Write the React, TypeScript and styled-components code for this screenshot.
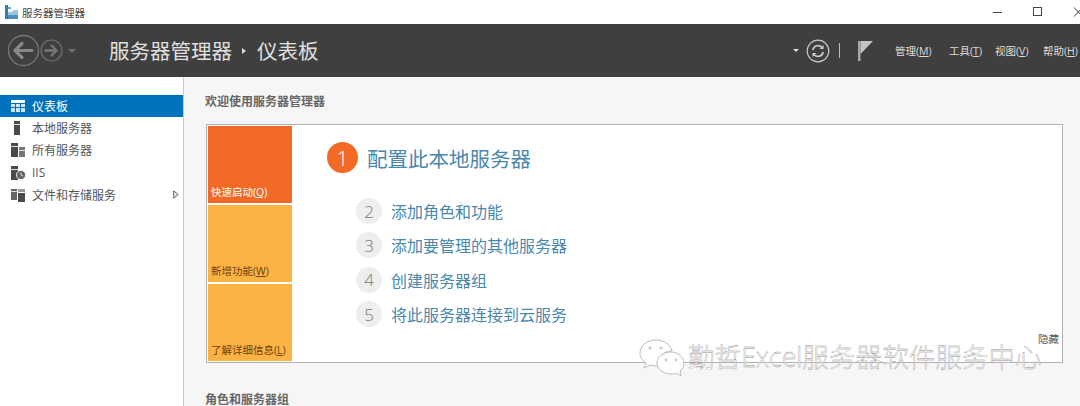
import React from "react";
import styled, { createGlobalStyle } from "styled-components";

const GlobalStyle = createGlobalStyle`
  html, body {
    margin: 0;
    padding: 0;
    width: 1080px;
    height: 406px;
    overflow: hidden;
    background: #f6f6f6;
    font-family: "Open Sans", "Noto Sans CJK SC", sans-serif;
  }
  * { box-sizing: border-box; }
`;

const Page = styled.div`
  position: relative;
  display: flex;
  flex-direction: column;
  width: 1080px;
  height: 406px;
  overflow: hidden;
`;

const TitleBar = styled.div`
  display: flex;
  align-items: center;
  height: 24px;
  padding-left: 4px;
  background: #fff;
  flex-shrink: 0;
`;

const TitleText = styled.div`
  margin-left: 3px;
  font-size: 10.5px;
  color: #444;
`;

const WindowButtons = styled.div`
  display: flex;
  align-items: center;
  gap: 30px;
  margin-left: auto;
  margin-right: -3px;
  height: 100%;
`;

const WindowButton = styled.div`
  display: flex;
  justify-content: center;
  align-items: center;
  width: 10px;
`;

const Header = styled.div`
  display: flex;
  align-items: center;
  height: 53px;
  padding-left: 7px;
  background: #3f3f3f;
  flex-shrink: 0;
`;

const NavArrows = styled.div`
  display: flex;
  align-items: center;
  width: 102px;
`;

const Crumb = styled.div`
  font-size: 20.5px;
  line-height: 28px;
  color: #e0e0e0;
`;

const CrumbSep = styled.div`
  width: 0;
  height: 0;
  margin: 0 11px 0 10px;
  border-left: 4px solid #ddd;
  border-top: 3px solid transparent;
  border-bottom: 3px solid transparent;
`;

const HeaderRight = styled.div`
  display: flex;
  align-items: center;
  margin-left: auto;
  height: 100%;
`;

const Caret = styled.div<{ $dim?: boolean }>`
  width: 0;
  height: 0;
  margin: ${(props) => (props.$dim ? "0 0 0 5px" : "0 7px 0 0")};
  border-top: ${(props) => (props.$dim ? "4px solid #6f6f6f" : "3px solid #ddd")};
  border-left: ${(props) => (props.$dim ? 4 : 3)}px solid transparent;
  border-right: ${(props) => (props.$dim ? 4 : 3)}px solid transparent;
`;

const Pipe = styled.div`
  width: 1px;
  height: 15px;
  margin: 0 18px 0 9px;
  background: #bbb;
`;

const FlagWrap = styled.div`
  display: flex;
  margin-right: 22px;
`;

const Menu = styled.div<{ $width: number }>`
  width: ${(props) => props.$width}px;
  font-size: 10.5px;
  color: #dcdcdc;
  white-space: nowrap;

  u {
    text-underline-offset: 1px;
  }
`;

const Body = styled.div`
  display: flex;
  flex: 1;
  min-height: 0;
`;

const Sidebar = styled.div`
  width: 184px;
  padding-top: 18px;
  background: #fff;
  border-right: 1px solid #c8c8c8;
  flex-shrink: 0;
`;

const NavItem = styled.div<{ $active?: boolean }>`
  display: flex;
  align-items: center;
  height: 22px;
  margin-bottom: 0.2px;
  padding-left: 11px;
  font-size: 12px;
  background: ${(props) => (props.$active ? "#0072bc" : "transparent")};
  color: ${(props) => (props.$active ? "#fff" : "#555")};
`;

const NavIcon = styled.div`
  display: flex;
  width: 21px;
  flex-shrink: 0;
`;

const NavArrow = styled.div`
  margin-left: auto;
  margin-right: 4px;
  display: flex;
`;

const Main = styled.div`
  flex: 1;
  min-width: 0;
  padding: 16px 17px 0 22px;
  background: #f6f6f6;
`;

const SectionTitle = styled.div`
  font-size: 12px;
  line-height: 17px;
  margin-left: -1px;
  color: #666;
  font-weight: 700;
`;

const Card = styled.div`
  display: flex;
  height: 239px;
  margin-top: 14px;
  padding: 1px;
  background: #fff;
  border: 1px solid #b2b2b2;
`;

const TileColumn = styled.div`
  display: flex;
  flex-direction: column;
  gap: 2px;
  width: 84px;
  flex-shrink: 0;
`;

const Tile = styled.div<{ $primary?: boolean }>`
  display: flex;
  align-items: flex-end;
  flex: 1;
  padding: 0 0 3px 3px;
  font-size: 10.5px;
  line-height: 16px;
  background: ${(props) => (props.$primary ? "#f26a26" : "#fdb244")};
  color: ${(props) => (props.$primary ? "#fff" : "#6b4310")};
  white-space: nowrap;
`;

const CardBody = styled.div`
  position: relative;
  flex: 1;
  padding: 16px 0 0 35px;
`;

const HeroRow = styled.div`
  display: flex;
  align-items: center;
  gap: 9px;
  height: 31px;
  margin-bottom: 25px;
`;

const HeroBadge = styled.div`
  display: flex;
  justify-content: center;
  align-items: center;
  width: 31px;
  height: 31px;
  border-radius: 50%;
  background: #f26a26;
  color: #fff;
  font-size: 21px;
  font-weight: 300;
`;

const HeroText = styled.div`
  font-size: 20.5px;
  color: #4a87ad;
`;

const StepList = styled.div`
  display: flex;
  flex-direction: column;
  gap: 8.4px;
  padding-left: 29px;
`;

const StepRow = styled.div`
  display: flex;
  align-items: center;
  gap: 9px;
  height: 26px;
`;

const StepBadge = styled.div`
  display: flex;
  justify-content: center;
  align-items: center;
  width: 26px;
  height: 26px;
  border-radius: 50%;
  background: #eeeeee;
  color: #777;
  font-size: 17px;
  font-weight: 300;
`;

const StepText = styled.div`
  font-size: 16px;
  color: #4a87ad;
`;

const HideLink = styled.div`
  position: absolute;
  right: 2px;
  bottom: 15px;
  font-size: 10.5px;
  color: #555;
`;

const BottomTitle = styled(SectionTitle)`
  margin-top: 28px;
`;

const Watermark = styled.div`
  position: absolute;
  left: 639px;
  top: 338px;
  display: flex;
  align-items: center;
  gap: 3px;
`;

const WatermarkText = styled.div`
  font-size: 26.6px;
  line-height: 26px;
  font-weight: 300;
  color: rgba(255, 255, 255, 0.92);
  white-space: nowrap;
  -webkit-text-stroke: 0.35px #8c8c8c;
`;

const AppIcon = () => (
  <svg width="15" height="16" viewBox="0 0 15 16">
    <rect x="1" y="1" width="3" height="14" fill="#2c7fb8" />
    <rect x="4" y="3" width="3" height="2" fill="#5aa5d6" />
    <path d="M4 8h4l2-2h4v9H4z" fill="#9cc4dc" />
    <rect x="4" y="11" width="10" height="4" fill="#4d8fbb" />
  </svg>
);

const BackArrow = () => (
  <svg width="33" height="33" viewBox="0 0 33 33" fill="none" stroke="#777" strokeLinecap="round" strokeLinejoin="round">
    <circle cx="16.5" cy="16.5" r="15" strokeWidth="1.3" />
    <path d="M25 16.5H9M15 9.5l-7 7 7 7" strokeWidth="3.2" stroke="#888" />
  </svg>
);

const ForwardArrow = () => (
  <svg width="23" height="23" viewBox="0 0 23 23" fill="none" stroke="#6f6f6f" strokeLinecap="round" strokeLinejoin="round">
    <circle cx="11.5" cy="11.5" r="10.5" strokeWidth="1.2" />
    <path d="M5.5 11.5h11M11.5 6.5l5 5-5 5" strokeWidth="2.4" stroke="#777" />
  </svg>
);

const RefreshIcon = () => (
  <svg width="24" height="24" viewBox="0 0 24 24" fill="none" stroke="#c8c8c8">
    <circle cx="12" cy="12" r="10.8" strokeWidth="1.2" />
    <path d="M6.8 11a5.3 5.3 0 0 1 9.2-2.6M17.2 13a5.3 5.3 0 0 1-9.2 2.6" strokeWidth="1.7" />
    <path d="M17.6 6v4h-4zM6.4 18v-4h4z" fill="#c8c8c8" stroke="none" />
  </svg>
);

const FlagIcon = () => (
  <svg width="15" height="22" viewBox="0 0 15 22">
    <rect x="0" y="1" width="2.5" height="20" fill="#a8a8a8" />
    <path d="M2.5 1H15L2.5 14z" fill="#c4c4c4" />
  </svg>
);

const DashboardIcon = () => (
  <svg width="14" height="12" viewBox="0 0 14 12">
    <rect width="14" height="3" fill="#fff" />
    <path d="M0 4h4v3H0zM5 4h4v3H5zM10 4h4v3h-4zM0 8h4v4H0zM5 8h4v4H5zM10 8h4v4h-4z" fill="#cfe4f3" />
  </svg>
);

const ServerIcon = () => (
  <svg width="14" height="14" viewBox="0 0 14 14">
    <rect x="3" y="0" width="6" height="14" fill="#4a4a4a" />
    <rect x="3" y="3" width="6" height="1" fill="#ddd" />
  </svg>
);

const ServersIcon = () => (
  <svg width="14" height="14" viewBox="0 0 14 14">
    <rect x="0" y="0" width="7" height="14" fill="#4a4a4a" />
    <rect x="0" y="3" width="7" height="1" fill="#ddd" />
    <rect x="8" y="4" width="6" height="10" fill="#777" />
    <rect x="8" y="7" width="6" height="1" fill="#ddd" />
  </svg>
);

const IisIcon = () => (
  <svg width="15" height="14" viewBox="0 0 15 14">
    <rect x="0" y="0" width="7" height="14" fill="#4a4a4a" />
    <rect x="0" y="3" width="7" height="1" fill="#ddd" />
    <circle cx="10" cy="9" r="4.6" fill="#666" stroke="#fff" strokeWidth="0.8" />
    <path d="M10 6.5V9l2 1" fill="none" stroke="#ddd" strokeWidth="0.9" />
  </svg>
);

const StorageIcon = () => (
  <svg width="15" height="14" viewBox="0 0 15 14">
    <path d="M0 1h6v11H0z" fill="#666" />
    <path d="M7 1h7v3H7z" fill="#999" />
    <path d="M7 5h7v9H7z" fill="#4a4a4a" />
    <path d="M0 3h6v1H0z" fill="#ddd" />
  </svg>
);

const ExpandArrow = () => (
  <svg width="6" height="9" viewBox="0 0 6 9">
    <path d="M0.7 0.8L5.2 4.5L0.7 8.2z" fill="#e8e8e8" stroke="#666" />
  </svg>
);

const WeChatIcon = () => (
  <svg width="46" height="38" viewBox="0 0 46 38" fill="#fff" stroke="#bbb" strokeWidth="1">
    <path d="M17 2C8 2 1 8 1 15c0 4 2 7 6 10l-2 5 6-3c2 .6 4 1 6 1 .8 0 1.5 0 2-.1C18 20 24 13 33 13c-1-6-8-11-16-11z" />
    <path d="M32 14c-8 0-14 5-14 11s6 11 14 11c2 0 3 0 5-1l5 3-1-5c3-2 4-5 4-8 0-6-6-11-13-11z" />
    <circle cx="11" cy="10" r="1.6" fill="#ccc" stroke="none" />
    <circle cx="22" cy="10" r="1.6" fill="#ccc" stroke="none" />
    <circle cx="27" cy="22" r="1.4" fill="#ccc" stroke="none" />
    <circle cx="37" cy="22" r="1.4" fill="#ccc" stroke="none" />
  </svg>
);

const navItems = [
  { label: "仪表板", icon: <DashboardIcon />, active: true },
  { label: "本地服务器", icon: <ServerIcon /> },
  { label: "所有服务器", icon: <ServersIcon /> },
  { label: "IIS", icon: <IisIcon /> },
  { label: "文件和存储服务", icon: <StorageIcon />, arrow: true },
];

const steps = [
  { num: 2, label: "添加角色和功能" },
  { num: 3, label: "添加要管理的其他服务器" },
  { num: 4, label: "创建服务器组" },
  { num: 5, label: "将此服务器连接到云服务" },
];

const menus = [
  { label: "管理", key: "M", width: 54 },
  { label: "工具", key: "T", width: 46 },
  { label: "视图", key: "V", width: 48 },
  { label: "帮助", key: "H", width: 37 },
];

function App() {
  return (
    <Page>
      <GlobalStyle />
      <TitleBar>
        <AppIcon />
        <TitleText>服务器管理器</TitleText>
        <WindowButtons>
          <WindowButton>
            <svg width="10" height="10" viewBox="0 0 10 10">
              <path d="M0 5.5h9" stroke="#444" fill="none" />
            </svg>
          </WindowButton>
          <WindowButton>
            <svg width="10" height="10" viewBox="0 0 10 10">
              <rect x="0.5" y="0.5" width="8" height="8" stroke="#444" fill="none" />
            </svg>
          </WindowButton>
          <WindowButton>
            <svg width="10" height="10" viewBox="0 0 10 10">
              <path d="M1 0.5l8.5 9M9.5 0.5l-8.5 9" stroke="#444" fill="none" />
            </svg>
          </WindowButton>
        </WindowButtons>
      </TitleBar>
      <Header>
        <NavArrows>
          <BackArrow />
          <ForwardArrow />
          <Caret $dim />
        </NavArrows>
        <Crumb>服务器管理器</Crumb>
        <CrumbSep />
        <Crumb>仪表板</Crumb>
        <HeaderRight>
          <Caret />
          <RefreshIcon />
          <Pipe />
          <FlagWrap>
            <FlagIcon />
          </FlagWrap>
          {menus.map((m) => (
            <Menu key={m.key} $width={m.width}>
              {m.label}(<u>{m.key}</u>)
            </Menu>
          ))}
        </HeaderRight>
      </Header>
      <Body>
        <Sidebar>
          {navItems.map((n) => (
            <NavItem key={n.label} $active={n.active}>
              <NavIcon>{n.icon}</NavIcon>
              {n.label}
              {n.arrow && (
                <NavArrow>
                  <ExpandArrow />
                </NavArrow>
              )}
            </NavItem>
          ))}
        </Sidebar>
        <Main>
          <SectionTitle>欢迎使用服务器管理器</SectionTitle>
          <Card>
            <TileColumn>
              <Tile $primary>
                <span>
                  快速启动(<u>Q</u>)
                </span>
              </Tile>
              <Tile>
                <span>
                  新增功能(<u>W</u>)
                </span>
              </Tile>
              <Tile>
                <span>
                  了解详细信息(<u>L</u>)
                </span>
              </Tile>
            </TileColumn>
            <CardBody>
              <HeroRow>
                <HeroBadge>1</HeroBadge>
                <HeroText>配置此本地服务器</HeroText>
              </HeroRow>
              <StepList>
                {steps.map((s) => (
                  <StepRow key={s.num}>
                    <StepBadge>{s.num}</StepBadge>
                    <StepText>{s.label}</StepText>
                  </StepRow>
                ))}
              </StepList>
              <HideLink>隐藏</HideLink>
            </CardBody>
          </Card>
          <BottomTitle>角色和服务器组</BottomTitle>
        </Main>
      </Body>
      <Watermark>
        <WeChatIcon />
        <WatermarkText>勤哲Excel服务器软件服务中心</WatermarkText>
      </Watermark>
    </Page>
  );
}

export default App;
